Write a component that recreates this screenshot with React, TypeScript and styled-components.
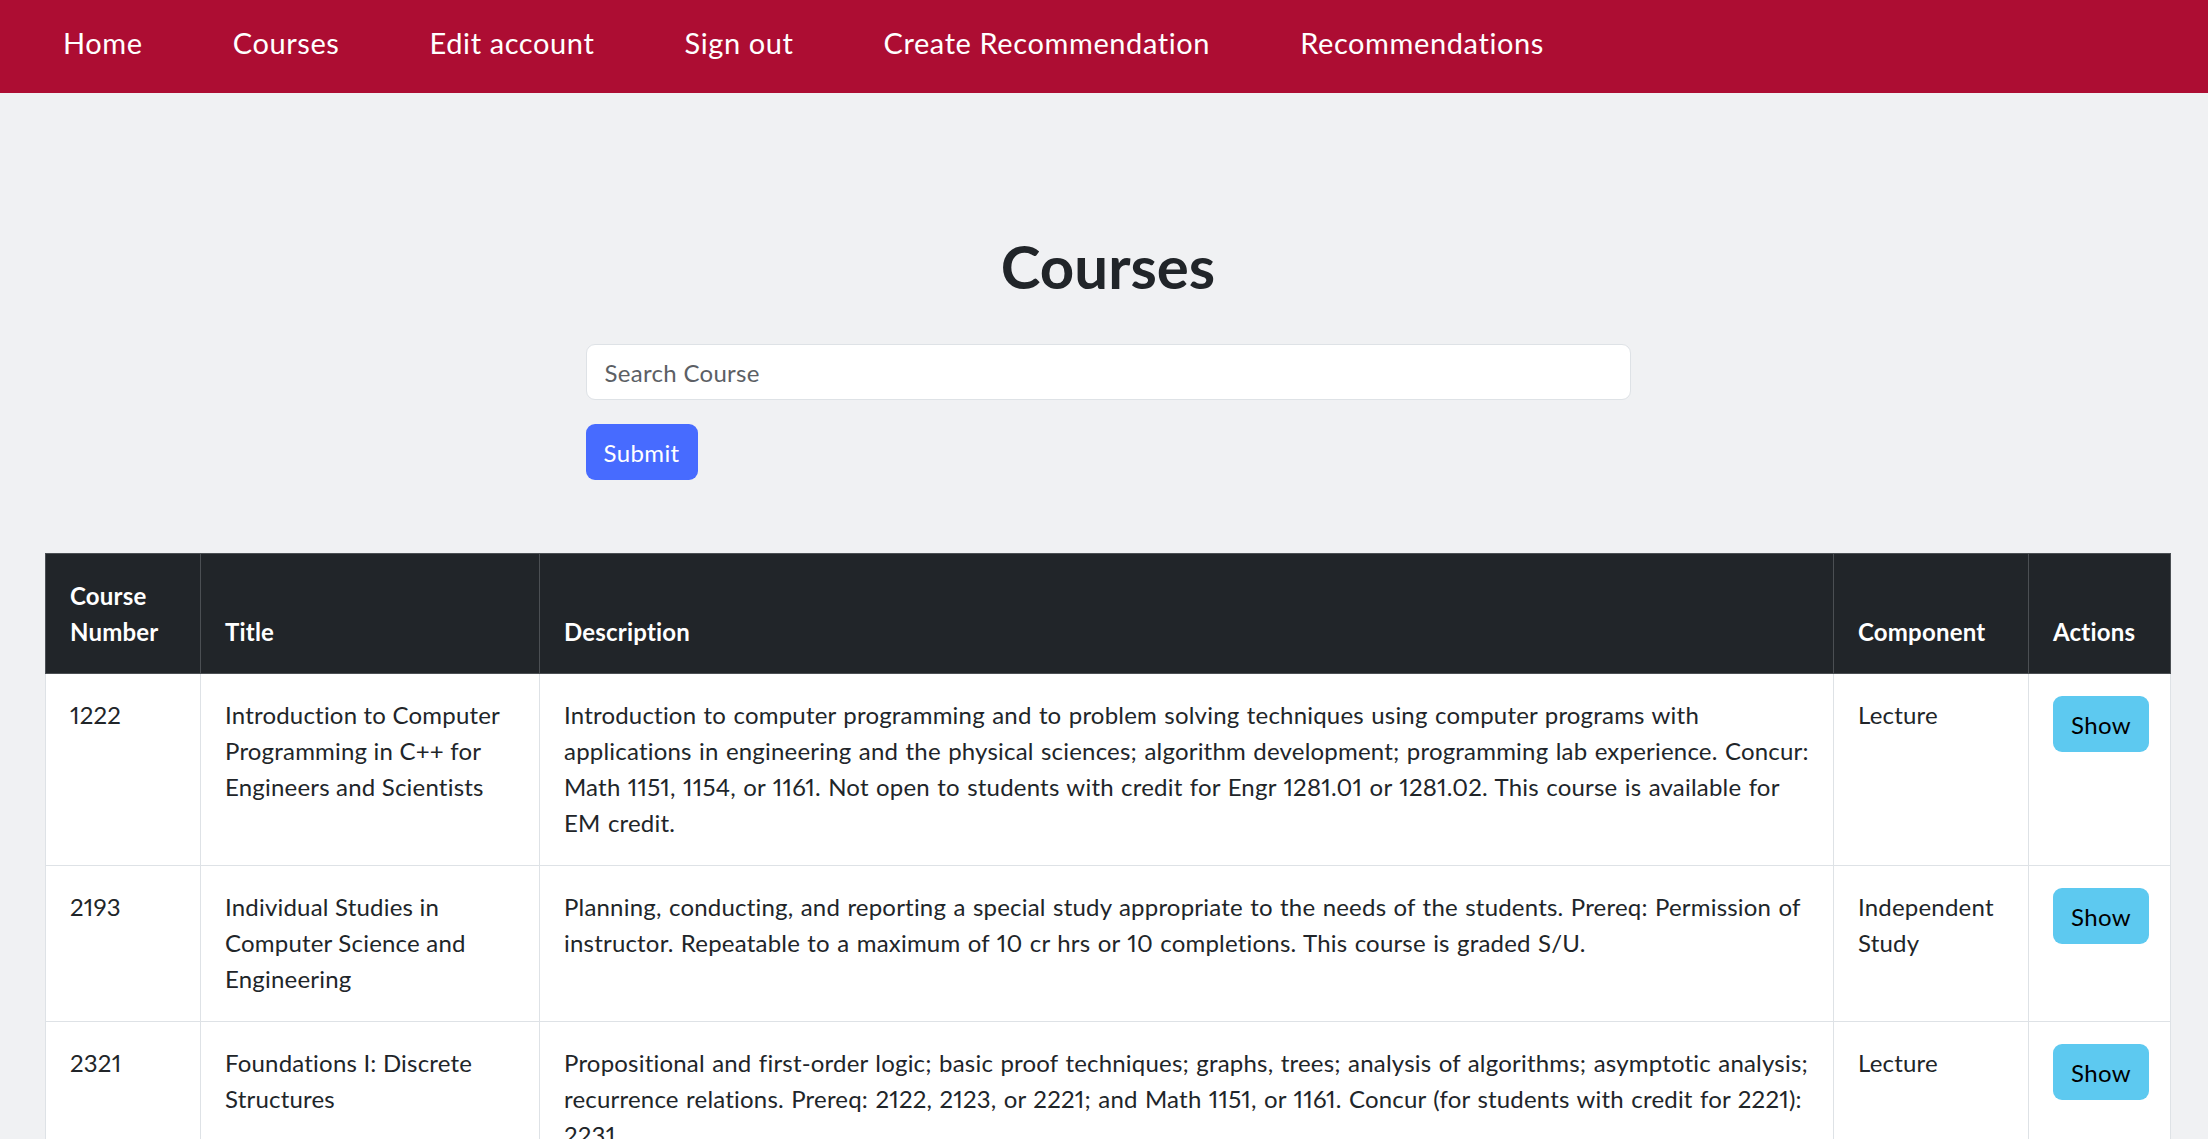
import * as React from 'react';
import styled, { createGlobalStyle } from 'styled-components';

const GlobalStyle = createGlobalStyle`
	html, body {
		margin: 0;
		padding: 0;
	}

	body {
		background: #f0f1f3;
		color: #212529;
		font-family: 'Lato', 'Open Sans', sans-serif;
		font-size: 24px;
		line-height: 1.5;
		letter-spacing: 0.2px;
		font-variant-numeric: proportional-nums;
	}

	* {
		box-sizing: border-box;
	}
`;

const NavBar = styled.nav`
	height: 93px;
	background: #ad0d33;
	display: flex;
	align-items: center;
	padding: 0 0 8px 63px;
	gap: 90px;
`;

const NavLink = styled.a`
	color: white;
	font-size: 29px;
	letter-spacing: 0.6px;
	text-decoration: none;
	white-space: nowrap;
`;

const Main = styled.main`
	display: flex;
	flex-direction: column;
	align-items: center;
	padding: 137px 0 0 8px;
`;

const Heading = styled.h1`
	margin: 0 0 42px;
	font-size: 60px;
	font-weight: 700;
	line-height: 1.2;
	letter-spacing: 0;
`;

const SearchForm = styled.form`
	width: 1045px;
	display: flex;
	flex-direction: column;
	align-items: flex-start;
	gap: 24px;
`;

const SearchInput = styled.input`
	width: 100%;
	height: 56px;
	padding: 0 18px;
	border: 1.5px solid #dee2e6;
	border-radius: 9px;
	background: white;
	font-family: inherit;
	font-size: 24px;
	letter-spacing: 0.3px;
	color: #212529;

	&::placeholder {
		color: #5c6065;
	}
`;

const Button = styled.button<{ $tone: 'primary' | 'info' }>`
	height: 56px;
	padding: 0 18px;
	border: none;
	border-radius: 9px;
	font-family: inherit;
	font-size: 24px;
	letter-spacing: 0.4px;
	background: ${(p) => (p.$tone === 'primary' ? '#476bff' : '#5dc9f0')};
	color: ${(p) => (p.$tone === 'primary' ? 'white' : '#000')};
	cursor: pointer;
`;

const TableWrap = styled.div`
	padding: 73px 38px 0 45px;
`;

const Table = styled.table`
	width: 2125px;
	table-layout: fixed;
	border-collapse: collapse;
	background: white;
`;

const HeadCell = styled.th`
	background: #212529;
	color: white;
	font-weight: 700;
	text-align: left;
	vertical-align: bottom;
	padding: 24px 24px 23px;
	border: 1.5px solid #4b4f53;
`;

const Cell = styled.td`
	vertical-align: top;
	padding: 23px 24px 24px;
	border: 1.5px solid #dee2e6;
`;

const DescriptionCell = styled(Cell)`
	padding-right: 18px;
	word-spacing: 1px;
`;

const ActionCell = styled(Cell)`
	padding-top: 22px;
`;

type Course = {
	number: string;
	title: string;
	description: string;
	component: string;
};

const courses: Course[] = [
	{
		number: '1222',
		title: 'Introduction to Computer Programming in C++ for Engineers and Scientists',
		description:
			'Introduction to computer programming and to problem solving techniques using computer programs with applications in engineering and the physical sciences; algorithm development; programming lab experience. Concur: Math 1151, 1154, or 1161. Not open to students with credit for Engr 1281.01 or 1281.02. This course is available for EM credit.',
		component: 'Lecture',
	},
	{
		number: '2193',
		title: 'Individual Studies in Computer Science and Engineering',
		description:
			'Planning, conducting, and reporting a special study appropriate to the needs of the students. Prereq: Permission of instructor. Repeatable to a maximum of 10 cr hrs or 10 completions. This course is graded S/U.',
		component: 'Independent Study',
	},
	{
		number: '2321',
		title: 'Foundations I: Discrete Structures',
		description:
			'Propositional and first-order logic; basic proof techniques; graphs, trees; analysis of algorithms; asymptotic analysis; recurrence relations. Prereq: 2122, 2123, or 2221; and Math 1151, or 1161. Concur (for students with credit for 2221): 2231.',
		component: 'Lecture',
	},
];

const navItems = ['Home', 'Courses', 'Edit account', 'Sign out', 'Create Recommendation', 'Recommendations'];

export default function App() {
	return (
		<>
			<GlobalStyle />
			<NavBar>
				{navItems.map((item) => (
					<NavLink key={item} href="#">{item}</NavLink>
				))}
			</NavBar>
			<Main>
				<Heading>Courses</Heading>
				<SearchForm onSubmit={(e) => e.preventDefault()}>
					<SearchInput placeholder="Search Course" />
					<Button $tone="primary" type="submit">Submit</Button>
				</SearchForm>
			</Main>
			<TableWrap>
				<Table>
					<colgroup>
						<col style={{ width: 155 }} />
						<col style={{ width: 339 }} />
						<col style={{ width: 1294 }} />
						<col style={{ width: 195 }} />
						<col style={{ width: 142 }} />
					</colgroup>
					<thead>
						<tr>
							<HeadCell>Course Number</HeadCell>
							<HeadCell>Title</HeadCell>
							<HeadCell>Description</HeadCell>
							<HeadCell>Component</HeadCell>
							<HeadCell>Actions</HeadCell>
						</tr>
					</thead>
					<tbody>
						{courses.map((course) => (
							<tr key={course.number}>
								<Cell>{course.number}</Cell>
								<Cell>{course.title}</Cell>
								<DescriptionCell>{course.description}</DescriptionCell>
								<Cell>{course.component}</Cell>
								<ActionCell>
									<Button $tone="info">Show</Button>
								</ActionCell>
							</tr>
						))}
					</tbody>
				</Table>
			</TableWrap>
		</>
	);
}
